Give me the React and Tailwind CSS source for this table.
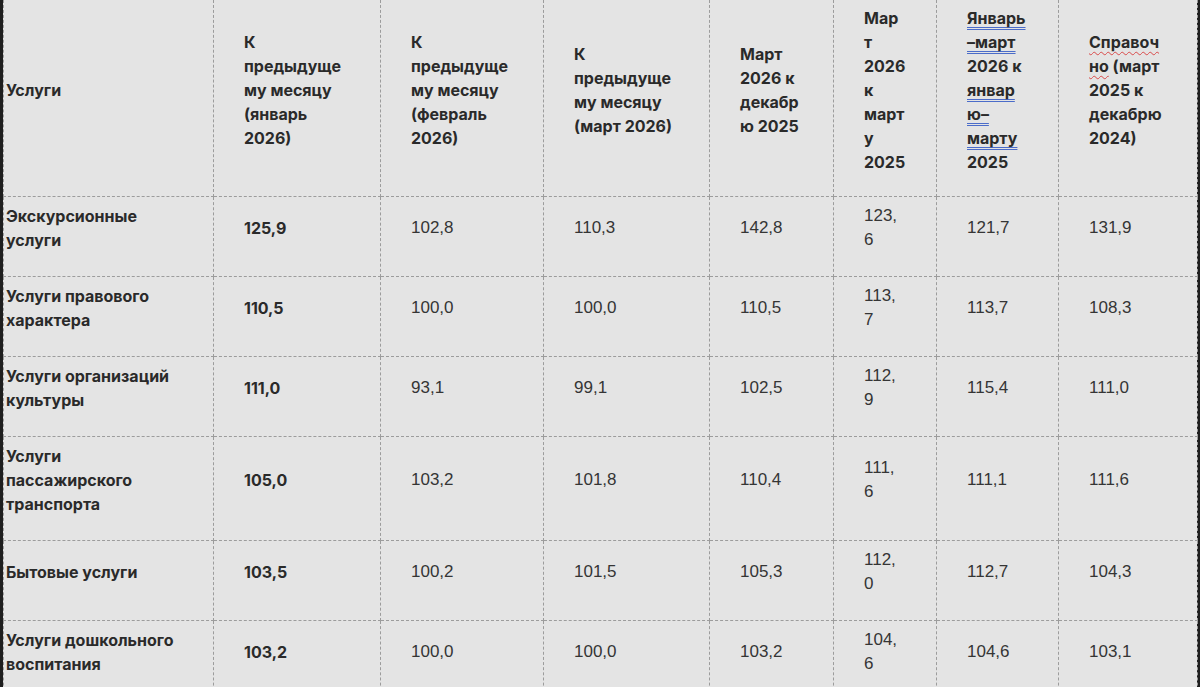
import React from 'react';

const rows = [
    ['Экскурсионные услуги', '125,9', '102,8', '110,3', '142,8', '123,6', '121,7', '131,9'],
    ['Услуги правового характера', '110,5', '100,0', '100,0', '110,5', '113,7', '113,7', '108,3'],
    ['Услуги организаций культуры', '111,0', '93,1', '99,1', '102,5', '112,9', '115,4', '111,0'],
    ['Услуги пассажирского транспорта', '105,0', '103,2', '101,8', '110,4', '111,6', '111,1', '111,6'],
    ['Бытовые услуги', '103,5', '100,2', '101,5', '105,3', '112,0', '112,7', '104,3'],
    ['Услуги дошкольного воспитания', '103,2', '100,0', '100,0', '103,2', '104,6', '104,6', '103,1'],
];

const grammar = 'underline decoration-double decoration-[#4b6cc9] decoration-1 underline-offset-[3px]';
const spelling = 'underline decoration-wavy decoration-[#d94a4a] decoration-1 underline-offset-[3px]';

const cell = 'border border-dashed border-[#9c9c9c] align-middle break-words';
const head = cell + ' border-t-0 pt-[6px] pb-[22px]';

function App() {
    return (
        <div className="h-[687px] w-full overflow-hidden bg-[#1e1e1e] px-[3px] font-['Inter','Noto_Sans',sans-serif] text-[16px] leading-6">
            <div className="h-full bg-[#e4e4e4]">
                <table className="w-[1194px] table-fixed border-collapse">
                    <colgroup>
                        <col className="w-[210px]" />
                        <col className="w-[167px]" />
                        <col className="w-[163px]" />
                        <col className="w-[166px]" />
                        <col className="w-[124px]" />
                        <col className="w-[103px]" />
                        <col className="w-[122px]" />
                        <col className="w-[139px]" />
                    </colgroup>
                    <thead>
                        <tr className="text-left font-bold text-[#2a2a2a]">
                            <th className={head + ' pl-[2px] pr-[30px]'}>Услуги</th>
                            <th className={head + ' px-[30px]'}>К предыдущему месяцу (январь 2026)</th>
                            <th className={head + ' px-[30px]'}>К предыдущему месяцу (февраль 2026)</th>
                            <th className={head + ' px-[30px]'}>К предыдущему месяцу (март 2026)</th>
                            <th className={head + ' px-[30px]'}>Март 2026 к декабрю 2025</th>
                            <th className={head + ' px-[30px]'}>Март 2026 к марту 2025</th>
                            <th className={head + ' px-[30px]'}>
                                <span className={grammar}>Январь–март</span> 2026 к <span className={grammar}>январю–марту</span> 2025
                            </th>
                            <th className={head + ' px-[30px]'}>
                                <span className={spelling}>Справочно</span> (март 2025 к декабрю 2024)
                            </th>
                        </tr>
                    </thead>
                    <tbody>
                        {rows.map((r) => (
                            <tr key={r[0]} className="text-[#353535]">
                                <td className={cell + ' pl-[2px] pr-[30px] pt-[7px] pb-[24px] font-bold text-[#2a2a2a]'}>{r[0]}</td>
                                <td className={cell + ' px-[30px] pt-[7px] pb-[24px] font-bold text-[#2a2a2a]'}>{r[1]}</td>
                                {r.slice(2).map((v, i) => (
                                    <td
                                        key={i}
                                        className={
                                            cell +
                                            " pl-[30px] pt-[7px] pb-[24px] font-['Liberation_Sans',Arial,sans-serif] text-[17px] " +
                                            (i === 3 ? 'pr-[33px]' : 'pr-[30px]')
                                        }
                                    >
                                        {v}
                                    </td>
                                ))}
                            </tr>
                        ))}
                    </tbody>
                </table>
            </div>
        </div>
    );
}

export default App;
